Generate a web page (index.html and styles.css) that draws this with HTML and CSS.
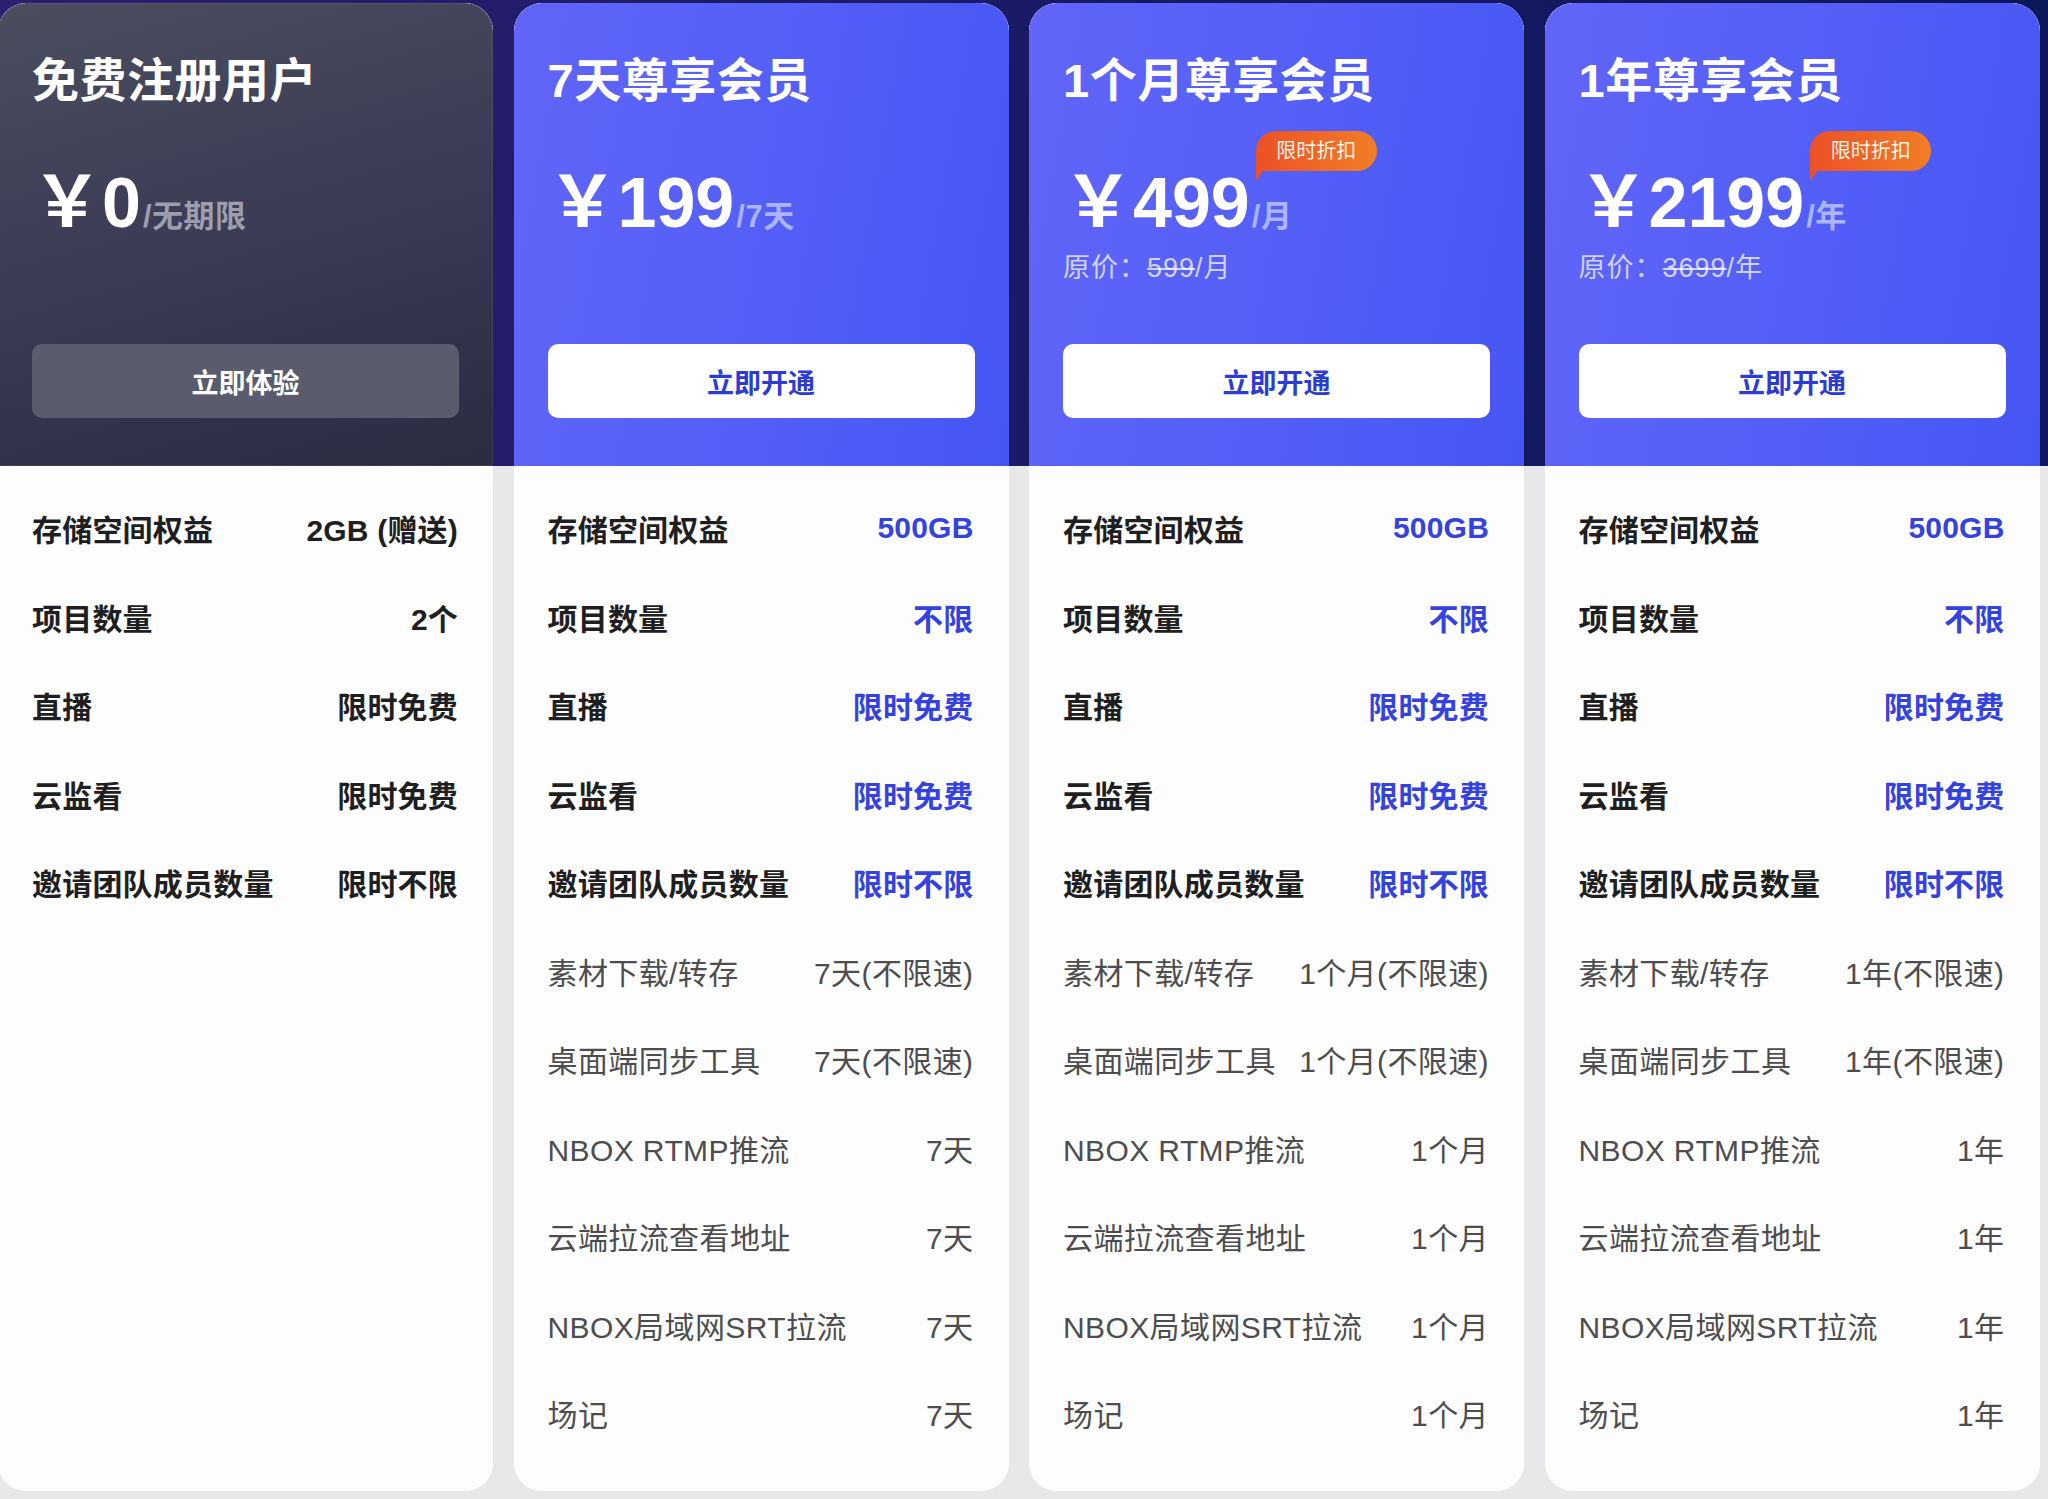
FILE: index.html
```html
<!DOCTYPE html>
<html lang="zh-CN">
<head>
<meta charset="utf-8">
<title>会员套餐</title>
<link rel="stylesheet" href="styles.css">
</head>
<body>
<div class="plans">
  <section class="card">
    <div class="head head-free">
      <h2 class="title">免费注册用户</h2>
      <div class="price"><span class="num">￥0</span><span class="per">/无期限</span></div>
      <button class="btn btn-free">立即体验</button>
    </div>
    <ul class="body">
      <li class="row strong"><span>存储空间权益</span><span>2GB (赠送)</span></li>
      <li class="row strong"><span>项目数量</span><span>2个</span></li>
      <li class="row strong"><span>直播</span><span>限时免费</span></li>
      <li class="row strong"><span>云监看</span><span>限时免费</span></li>
      <li class="row strong"><span>邀请团队成员数量</span><span>限时不限</span></li>
    </ul>
  </section>

  <section class="card">
    <div class="head head-vip">
      <h2 class="title">7天尊享会员</h2>
      <div class="price"><span class="num">￥199</span><span class="per">/7天</span></div>
      <button class="btn btn-vip">立即开通</button>
    </div>
    <ul class="body">
      <li class="row strong"><span>存储空间权益</span><span class="hl">500GB</span></li>
      <li class="row strong"><span>项目数量</span><span class="hl">不限</span></li>
      <li class="row strong"><span>直播</span><span class="hl">限时免费</span></li>
      <li class="row strong"><span>云监看</span><span class="hl">限时免费</span></li>
      <li class="row strong"><span>邀请团队成员数量</span><span class="hl">限时不限</span></li>
      <li class="row"><span>素材下载/转存</span><span>7天(不限速)</span></li>
      <li class="row"><span>桌面端同步工具</span><span>7天(不限速)</span></li>
      <li class="row"><span>NBOX RTMP推流</span><span>7天</span></li>
      <li class="row"><span>云端拉流查看地址</span><span>7天</span></li>
      <li class="row"><span>NBOX局域网SRT拉流</span><span>7天</span></li>
      <li class="row"><span>场记</span><span>7天</span></li>
    </ul>
  </section>

  <section class="card">
    <div class="head head-vip">
      <h2 class="title">1个月尊享会员</h2>
      <div class="price"><span class="num">￥499<span class="badge">限时折扣</span></span><span class="per">/月</span></div>
      <div class="orig">原价：<s>599</s>/月</div>
      <button class="btn btn-vip">立即开通</button>
    </div>
    <ul class="body">
      <li class="row strong"><span>存储空间权益</span><span class="hl">500GB</span></li>
      <li class="row strong"><span>项目数量</span><span class="hl">不限</span></li>
      <li class="row strong"><span>直播</span><span class="hl">限时免费</span></li>
      <li class="row strong"><span>云监看</span><span class="hl">限时免费</span></li>
      <li class="row strong"><span>邀请团队成员数量</span><span class="hl">限时不限</span></li>
      <li class="row"><span>素材下载/转存</span><span>1个月(不限速)</span></li>
      <li class="row"><span>桌面端同步工具</span><span>1个月(不限速)</span></li>
      <li class="row"><span>NBOX RTMP推流</span><span>1个月</span></li>
      <li class="row"><span>云端拉流查看地址</span><span>1个月</span></li>
      <li class="row"><span>NBOX局域网SRT拉流</span><span>1个月</span></li>
      <li class="row"><span>场记</span><span>1个月</span></li>
    </ul>
  </section>

  <section class="card">
    <div class="head head-vip">
      <h2 class="title">1年尊享会员</h2>
      <div class="price"><span class="num">￥2199<span class="badge">限时折扣</span></span><span class="per">/年</span></div>
      <div class="orig">原价：<s>3699</s>/年</div>
      <button class="btn btn-vip">立即开通</button>
    </div>
    <ul class="body">
      <li class="row strong"><span>存储空间权益</span><span class="hl">500GB</span></li>
      <li class="row strong"><span>项目数量</span><span class="hl">不限</span></li>
      <li class="row strong"><span>直播</span><span class="hl">限时免费</span></li>
      <li class="row strong"><span>云监看</span><span class="hl">限时免费</span></li>
      <li class="row strong"><span>邀请团队成员数量</span><span class="hl">限时不限</span></li>
      <li class="row"><span>素材下载/转存</span><span>1年(不限速)</span></li>
      <li class="row"><span>桌面端同步工具</span><span>1年(不限速)</span></li>
      <li class="row"><span>NBOX RTMP推流</span><span>1年</span></li>
      <li class="row"><span>云端拉流查看地址</span><span>1年</span></li>
      <li class="row"><span>NBOX局域网SRT拉流</span><span>1年</span></li>
      <li class="row"><span>场记</span><span>1年</span></li>
    </ul>
  </section>
</div>
</body>
</html>
```

FILE: styles.css
```css
* { box-sizing: border-box; }

html, body {
  margin: 0;
  padding: 0;
}

body {
  width: 2048px;
  height: 1499px;
  overflow: hidden;
  font-family: "Liberation Sans", "Noto Sans CJK SC", sans-serif;
  background-color: #e8e8ea;
  background-image: linear-gradient(90deg, #2d2070 0%, #1a1b66 45%, #0c1859 100%);
  background-size: 100% 466px;
  background-repeat: no-repeat;
}

.plans {
  display: grid;
  grid-template-columns: repeat(4, 495px);
  column-gap: 20.5px;
  margin: 3px 0 0 -2px;
  height: 1488px;
}

.card {
  display: flex;
  flex-direction: column;
  border-radius: 28px;
  overflow: hidden;
  background: #fdfdfd;
}

.head {
  height: 463px;
  display: flex;
  flex-direction: column;
  padding: 50px 34px 48px 34px;
  color: #fff;
  border-radius: 28px 28px 0 0;
}

.head-free {
  background: linear-gradient(165deg, #4b4e5e 0%, #3a3b55 50%, #2b2c42 100%);
  box-shadow: inset 0 0 0 1px rgba(255, 255, 255, 0.07);
}

.head-vip {
  background: linear-gradient(100deg, #6265f8 0%, #5560f7 45%, #4656f4 100%);
}

.title {
  margin: 0;
  font-size: 47px;
  line-height: 56px;
  font-weight: 700;
  letter-spacing: 0.5px;
}

.price {
  display: flex;
  align-items: baseline;
  height: 80px;
  margin-top: 54px;
  line-height: 80px;
}

.num {
  position: relative;
  font-size: 70px;
  font-weight: 700;
  line-height: 80px;
}

.per {
  font-size: 31px;
  font-weight: 600;
  margin-left: 2px;
  letter-spacing: 0.5px;
}

.head-free .per { color: #9c9eae; }
.head-vip .per { color: #aab4ff; }

.badge {
  position: absolute;
  left: calc(100% + 6px);
  top: -32px;
  width: 121px;
  height: 40px;
  border-radius: 20px 20px 20px 0;
  background: linear-gradient(90deg, #ec5126 0%, #f17e27 100%);
  color: #fff4e8;
  font-size: 20px;
  font-weight: 400;
  line-height: 40px;
  text-align: center;
  letter-spacing: 0;
}

.badge::after {
  content: "";
  position: absolute;
  left: 0;
  top: 100%;
  width: 7px;
  height: 10px;
  background: #ec5126;
  clip-path: polygon(0 0, 100% 0, 0 100%);
}

.orig {
  margin-top: 8px;
  font-size: 27px;
  line-height: 34px;
  letter-spacing: 1px;
  color: rgba(255, 255, 255, 0.72);
}

.orig s {
  text-decoration-thickness: 2px;
}

.btn {
  margin-top: auto;
  height: 74px;
  border: none;
  border-radius: 10px;
  font-family: inherit;
  font-size: 27px;
  font-weight: 600;
  cursor: pointer;
}

.btn-free {
  background: #5a5c6e;
  color: #fff;
}

.btn-vip {
  background: #fff;
  color: #2b3bd3;
}

.body {
  flex: 1;
  list-style: none;
  margin: 0;
  padding: 18px 35px 31px 34px;
  background: #fdfdfd;
}

.row {
  display: flex;
  justify-content: space-between;
  align-items: center;
  height: 88.5px;
  font-size: 30px;
  color: #4d4d4f;
  letter-spacing: 0.4px;
}

.row.strong {
  font-weight: 600;
  color: #1f1f22;
  letter-spacing: 0.2px;
}

.row .hl {
  color: #3442e2;
}
```
